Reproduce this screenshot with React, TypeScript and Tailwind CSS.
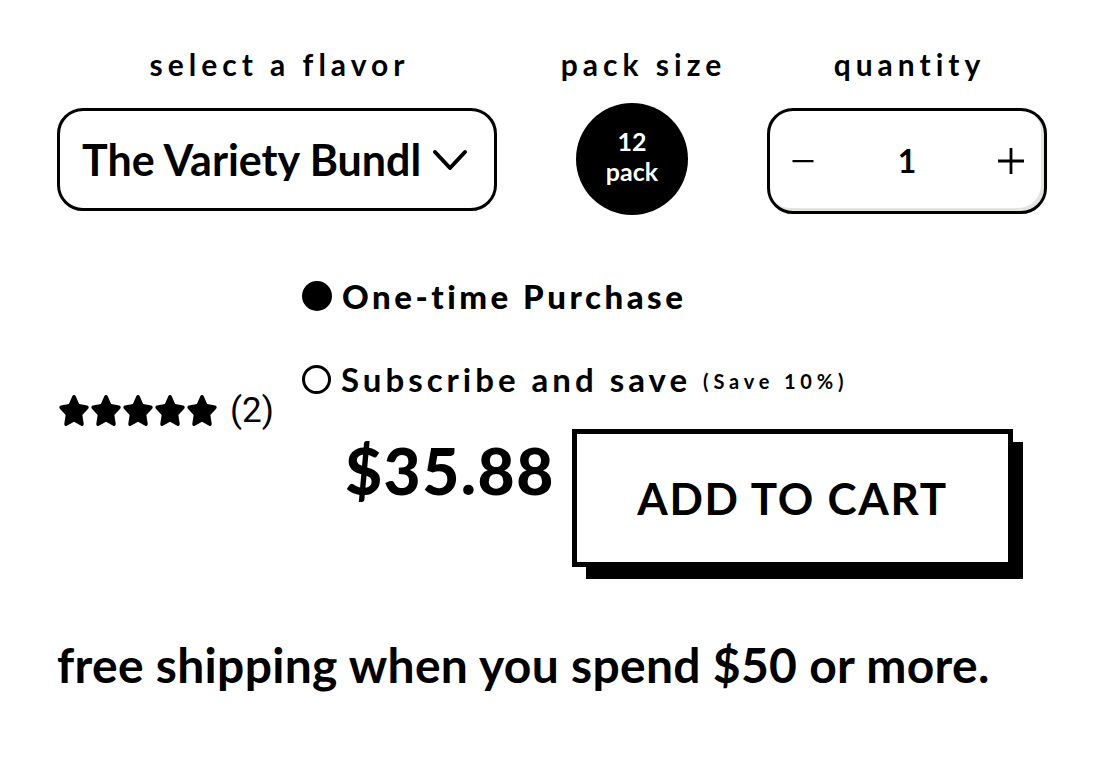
import React from "react";

const Star = () => (
  <svg viewBox="0 0 576 512" preserveAspectRatio="none" className="w-[32px] h-[31px]" fill="currentColor">
    <path d="M316.9 18C311.6 7 300.4 0 288.1 0s-23.4 7-28.8 18L195 150.3 51.4 171.5c-12 1.8-22 10.2-25.7 21.7s-.7 24.2 7.9 32.7L137.8 329 113.2 474.7c-2 12 3 24.2 12.9 31.3s23 8 33.8 2.3l128.3-68.5 128.3 68.5c10.8 5.7 23.9 4.9 33.8-2.3s14.9-19.3 12.9-31.3L438.5 329 542.7 225.9c8.6-8.5 11.7-21.2 7.9-32.7s-13.7-19.9-25.7-21.7L381.2 150.3 316.9 18z" />
  </svg>
);

export default function App() {
  return (
    <div
      className="w-[1114px] h-[768px] bg-white text-black overflow-hidden"
      style={{ fontFamily: "Lato, 'Noto Sans', sans-serif" }}
    >
      {/* top row */}
      <div className="flex pl-[57px] pt-[44px]">
        <div className="w-[440px] flex flex-col items-center">
          <div className="h-[40px] text-[30px] font-bold tracking-[5px] leading-[40px] pl-[5px] whitespace-nowrap">select a flavor</div>
          <div className="mt-[24px] w-full h-[103px] border-[3px] border-black rounded-[26px] flex items-center pl-[22px] pr-[26px]">
            <span className="text-[43px] font-bold leading-none whitespace-nowrap overflow-hidden w-[339px]">The Variety Bundle</span>
            <svg viewBox="0 0 36 24" className="w-[36px] h-[24px] ml-auto" fill="none" stroke="black" strokeWidth="4" strokeLinecap="round" strokeLinejoin="round">
              <path d="M3 4 L18 20 L33 4" />
            </svg>
          </div>
        </div>
        <div className="w-[170px] ml-[55px] flex flex-col items-center">
          <div className="h-[40px] text-[30px] font-bold tracking-[5px] leading-[40px] pl-[13px] whitespace-nowrap">pack size</div>
          <div className="mt-[19px] w-[112px] h-[112px] rounded-full bg-black text-white flex flex-col items-center justify-center font-bold text-[25px] leading-[30px] pb-[6px] -ml-[10px]">
            <span>12</span>
            <span>pack</span>
          </div>
        </div>
        <div className="w-[280px] ml-[45px] flex flex-col items-center">
          <div className="h-[40px] text-[30px] font-bold tracking-[5px] leading-[40px] pl-[5px] whitespace-nowrap">quantity</div>
          <div className="mt-[24px] w-full h-[106px] border-[3px] border-black rounded-[26px] shadow-[inset_-3px_-3px_0_#e6e4df] flex items-center justify-between px-[20px] text-[32px] font-bold">
            <svg viewBox="0 0 28 4" className="w-[26px] h-[3px]"><rect width="28" height="3" fill="black" /></svg>
            <span>1</span>
            <svg viewBox="0 0 28 28" className="w-[26px] h-[26px]" stroke="black" strokeWidth="3"><path d="M14 0 V28 M0 14 H28" /></svg>
          </div>
        </div>
      </div>

      {/* middle */}
      <div className="flex pl-[58px] mt-[66px]">
        <div className="w-[244px] flex items-center self-start mt-[112px]">
          <div className="flex text-black">
            <Star /><Star /><Star /><Star /><Star />
          </div>
          <span className="ml-[12px] text-[35px] leading-none" style={{ fontFamily: "Roboto, sans-serif" }}>(2)</span>
        </div>
        <div className="flex flex-col">
          <div className="flex items-center h-[30px]">
            <span className="w-[30px] h-[30px] rounded-full bg-black" />
            <span className="ml-[10px] text-[33px] font-black tracking-[3.5px] leading-none whitespace-nowrap">One-time Purchase</span>
          </div>
          <div className="flex items-center h-[30px] mt-[53px]">
            <span className="w-[29px] h-[29px] rounded-full border-[3px] border-black" />
            <span className="ml-[10px] text-[33px] font-bold tracking-[4px] leading-none whitespace-nowrap">Subscribe and save</span>
            <span className="ml-[12px] text-[20px] font-bold tracking-[4.8px] leading-none mt-[4px] whitespace-nowrap">(Save 10%)</span>
          </div>
          <div className="flex mt-[35px]">
            <div className="w-[270px] shrink-0 pl-[43px] text-[64px] font-black tracking-[1.5px] leading-none mt-[10px] whitespace-nowrap">$35.88</div>
            <div className="relative w-[441px] h-[138px]">
              <div className="absolute left-[14px] top-[13px] w-[437px] h-[137px] bg-black" />
              <div className="absolute inset-0 bg-white border-[5px] border-black flex items-center justify-center">
                <span className="text-[44px] font-bold tracking-[1.7px] whitespace-nowrap">ADD TO CART</span>
              </div>
            </div>
          </div>
        </div>
      </div>

      <div className="pl-[57px] mt-[74px] text-[48px] font-bold tracking-[0.3px] leading-none whitespace-nowrap">free shipping when you spend $50 or more.</div>
    </div>
  );
}
